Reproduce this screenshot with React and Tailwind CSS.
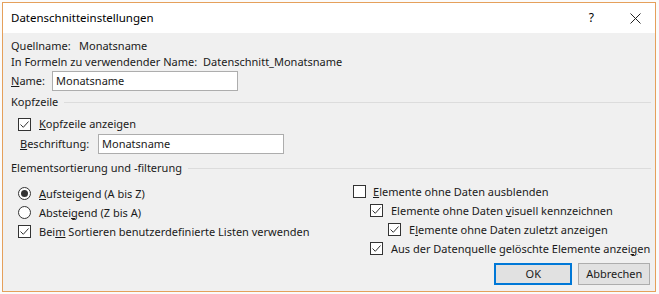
import React from "react";

function Check({ checked }) {
  return (
    <span className="flex h-[13px] w-[13px] shrink-0 items-center justify-center border border-[#333333] bg-white">
      {checked && (
        <svg width="11" height="11" viewBox="0 0 11 11">
          <path d="M1.5 5.5 L4.3 8.3 L9.5 2.5" fill="none" stroke="#333333" strokeWidth="1" />
        </svg>
      )}
    </span>
  );
}

function Radio({ checked }) {
  return (
    <span className="flex h-[13px] w-[13px] shrink-0 items-center justify-center rounded-full border border-[#333333] bg-white">
      {checked && <span className="h-[7px] w-[7px] rounded-full bg-[#333333]" />}
    </span>
  );
}

function Heading({ children }) {
  return (
    <div className="flex h-[16px] items-center">
      <span className="shrink-0">{children}</span>
      <span className="ml-[6px] h-px flex-1 bg-[#dcdcdc]" />
    </div>
  );
}

export default function App() {
  return (
    <div className="h-[294px] w-[659px] overflow-hidden whitespace-nowrap bg-[#fbfbfb] pl-[2px] pt-[2px] font-['Noto_Sans',sans-serif] text-[11px] leading-[16px] text-black">
      <div className="flex h-[290px] w-[654px] flex-col border border-[#e5a05b] bg-[#f0f0f0]">
        {/* title bar */}
        <div className="flex h-[30px] shrink-0 items-center bg-white pl-[8px] pr-[14px] text-[11.5px]">
          <span className="flex-1">Datenschnitteinstellungen</span>
          <span className="mr-[36px] text-[12px]">?</span>
          <svg width="11" height="11" viewBox="0 0 11 11">
            <path d="M0.5 0.5 L10.5 10.5 M10.5 0.5 L0.5 10.5" stroke="#222" strokeWidth="1" />
          </svg>
        </div>

        <div className="flex flex-1 flex-col pl-[8px] pr-[4px] pt-[5px] text-[#1a1a1a]">
          <div className="flex h-[16px] items-center">
            <span className="w-[68px] shrink-0">Quellname:</span>
            <span>Monatsname</span>
          </div>
          <div className="flex h-[16px] items-center">
            <span className="w-[192px] shrink-0">In Formeln zu verwendender Name:</span>
            <span>Datenschnitt_Monatsname</span>
          </div>
          <div className="mt-[1px] flex h-[20px] items-center">
            <span className="w-[41px] shrink-0">
              <u>N</u>ame:
            </span>
            <div className="flex h-[20px] w-[186px] items-center border border-[#adadad] bg-white pl-[3px]">
              Monatsname
            </div>
          </div>

          <div className="mt-[3px]">
            <Heading>Kopfzeile</Heading>
          </div>
          <div className="mt-[6px] flex h-[16px] items-center gap-[8px] pl-[7px]">
            <Check checked />
            <span>
              <u>K</u>opfzeile anzeigen
            </span>
          </div>
          <div className="mt-[2px] flex h-[20px] items-center pl-[9px]">
            <span className="w-[78px] shrink-0">
              <u>B</u>eschriftung:
            </span>
            <div className="flex h-[20px] w-[186px] items-center border border-[#adadad] bg-white pl-[3px]">
              Monatsname
            </div>
          </div>

          <div className="mt-[6px]">
            <Heading>Elementsortierung und -filterung</Heading>
          </div>

          <div className="grid flex-1 grid-cols-[342px_1fr] pr-[3px]">
            <div className="flex flex-col pl-[7px] pt-[8px]">
              <div className="flex h-[19px] items-center gap-[8px]">
                <Radio checked />
                <span>
                  <u>A</u>ufsteigend (A bis Z)
                </span>
              </div>
              <div className="flex h-[19px] items-center gap-[8px]">
                <Radio />
                <span>
                  Abstei<u>g</u>end (Z bis A)
                </span>
              </div>
              <div className="flex h-[19px] items-center gap-[8px]">
                <Check checked />
                <span>
                  Bei<u>m</u> Sortieren benutzerdefinierte Listen verwenden
                </span>
              </div>
            </div>

            <div className="flex flex-col pt-[6px]">
              <div className="flex h-[19px] items-center gap-[7px]">
                <Check />
                <span>
                  <u>E</u>lemente ohne Daten ausblenden
                </span>
              </div>
              <div className="flex h-[19px] items-center gap-[8px] pl-[17px]">
                <Check checked />
                <span>
                  Elemente ohne Daten <u>v</u>isuell kennzeichnen
                </span>
              </div>
              <div className="flex h-[19px] items-center gap-[8px] pl-[35px]">
                <Check checked />
                <span>
                  E<u>l</u>emente ohne Daten zuletzt anzeigen
                </span>
              </div>
              <div className="flex h-[19px] items-center gap-[8px] pl-[17px]">
                <Check checked />
                <span>
                  Aus der Datenquelle gelöschte Elemente anzei<u>g</u>en
                </span>
              </div>
              <div className="mt-[5px] flex justify-end gap-[6px]">
                <button className="flex h-[22px] w-[78px] items-center justify-center border-2 border-[#0078d7] bg-[#e1e1e1]">
                  OK
                </button>
                <button className="flex h-[22px] w-[72px] items-center justify-center border border-[#adadad] bg-[#e1e1e1]">
                  Abbrechen
                </button>
              </div>
            </div>
          </div>
        </div>
      </div>
    </div>
  );
}
